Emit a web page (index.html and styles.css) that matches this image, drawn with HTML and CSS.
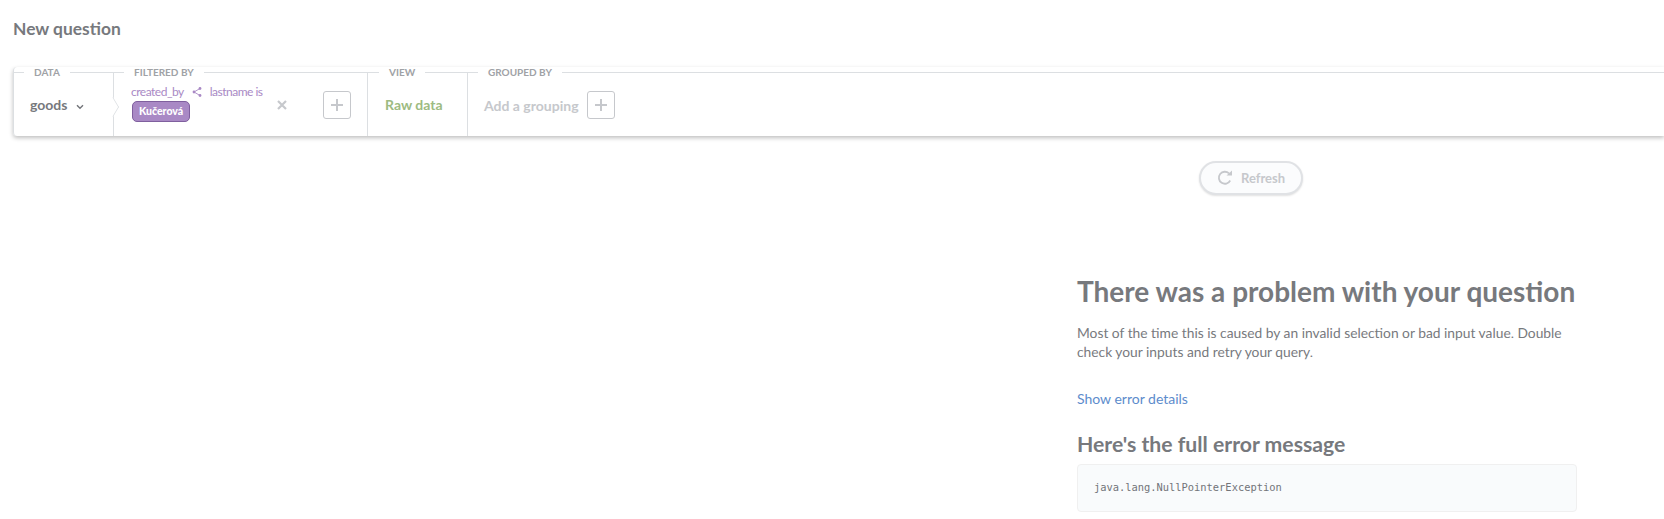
FILE: index.html
```html
<!DOCTYPE html>
<html>
  <head>
    <title>New question</title>
    <link rel="stylesheet" href="styles.css">
  </head>
  <body>
    <h1 class="title">New question</h1>
    <div class="builder">
      <fieldset class="section section-data">
        <legend>DATA</legend>
        <div class="goods">goods
          <svg class="chevron" width="8" height="6" viewBox="0 0 8 6"><path d="M1 1.2 L4 4.2 L7 1.2" fill="none" stroke="#727479" stroke-width="1.4"/></svg>
        </div>
        <span class="arrow"></span>
      </fieldset>
      <fieldset class="section section-filter">
        <legend>FILTERED BY</legend>
        <div class="filter">
          <div class="filter-text">
            <div class="filter-line">
              <span>created_by</span>
              <svg class="connect" width="10" height="10" viewBox="0 0 10 10"><path d="M8 1.5 L2 5 L8 8.5" fill="none" stroke="#a989c5" stroke-width="0.9"/><circle cx="8" cy="1.5" r="1.4" fill="#a989c5"/><circle cx="2" cy="5" r="1.4" fill="#a989c5"/><circle cx="8" cy="8.5" r="1.4" fill="#a989c5"/></svg>
              <span>lastname is</span>
            </div>
            <span class="pill">Kučerová</span>
          </div>
          <svg class="close" width="10" height="10" viewBox="0 0 10 10"><path d="M1 1 L9 9 M9 1 L1 9" stroke="#c6c8cc" stroke-width="2.2"/></svg>
          <span class="add">
            <svg width="14" height="14" viewBox="0 0 14 14"><path d="M7 1 V13 M1 7 H13" stroke="#c6c8cc" stroke-width="2"/></svg>
          </span>
        </div>
      </fieldset>
      <fieldset class="section section-view">
        <legend>VIEW</legend>
        <div class="view">Raw data</div>
      </fieldset>
      <fieldset class="section section-group">
        <legend>GROUPED BY</legend>
        <div class="grouping">
          <span>Add a grouping</span>
          <span class="add">
            <svg width="14" height="14" viewBox="0 0 14 14"><path d="M7 1 V13 M1 7 H13" stroke="#c6c8cc" stroke-width="2"/></svg>
          </span>
        </div>
      </fieldset>
    </div>
    <div class="refresh-row">
      <button class="refresh">
        <svg width="16" height="16" viewBox="0 0 16 16"><path d="M13.2 10.5 A6 6 0 1 1 12 3.4" fill="none" stroke="#c6c8cc" stroke-width="1.8"/><path d="M9.5 5.6 H15 V0.4 Z" fill="#c6c8cc"/></svg>
        Refresh
      </button>
    </div>
    <div class="error">
      <h2 class="error-title">There was a problem with your question</h2>
      <p class="error-text">Most of the time this is caused by an invalid selection or bad input value. Double check your inputs and retry your query.</p>
      <a class="error-link">Show error details</a>
      <h3 class="error-sub">Here's the full error message</h3>
      <pre class="error-code">java.lang.NullPointerException</pre>
    </div>
  </body>
</html>
```

FILE: styles.css
```css
html,
body {
  margin: 0;
  height: 519px;
  overflow: hidden;
  background: #fff;
  font-family: "Lato", sans-serif;
  color: #77797d;
}

.title {
  margin: 0;
  padding: 19px 0 0 13px;
  font-size: 17.4px;
  line-height: 20px;
  font-weight: 700;
}

.builder {
  display: flex;
  margin: 28px 0 0 13px;
  height: 69px;
  border-left: 1px solid #dcdfe2;
  border-radius: 4px 0 0 4px;
  box-shadow: 0 2px 4px rgba(0, 0, 0, 0.25);
}

.section {
  position: relative;
  box-sizing: border-box;
  margin: 0;
  padding: 0;
  min-width: 0;
  height: 69px;
  border: 0;
  border-top: 1px solid #dcdfe2;
  border-right: 1px solid #dcdfe2;
}

.section legend {
  font-size: 10px;
  line-height: 10px;
  font-weight: 700;
  color: #a0a2a6;
  padding: 0 10px;
}

.section-data {
  width: 100px;
}

.section-data legend {
  margin-left: 10px;
}

.section-filter {
  width: 254px;
}

.section-filter legend {
  margin-left: 10px;
}

.section-view {
  width: 100px;
}

.section-view legend {
  margin-left: 11px;
}

.section-group {
  flex: 1;
  border-right: 0;
}

.section-group legend {
  margin-left: 10px;
}

.goods {
  padding: 19px 0 0 16px;
  font-size: 14px;
  line-height: 18px;
  font-weight: 700;
}

.chevron {
  margin-left: 5px;
}

.arrow {
  position: absolute;
  top: 23px;
  right: -7px;
  width: 13px;
  height: 13px;
  background: #fff;
  border-top: 1px solid #dcdfe2;
  border-right: 1px solid #dcdfe2;
  transform: scaleX(0.6) rotate(45deg);
}

.filter {
  display: flex;
  align-items: center;
  height: 56px;
  padding-left: 17px;
}

.filter-text {
  width: 146px;
  margin-bottom: 5px;
  color: #a989c5;
  font-size: 12px;
  line-height: 14px;
  letter-spacing: -0.5px;
}

.filter-line {
  display: flex;
  align-items: center;
  height: 17px;
  margin-bottom: 1px;
  white-space: nowrap;
}

.connect {
  margin: 0 8px;
}

.pill {
  display: inline-block;
  margin-left: 1px;
  padding: 0 6px;
  height: 19px;
  line-height: 19px;
  font-size: 10.5px;
  letter-spacing: 0;
  color: #fff;
  font-weight: 900;
  background: #a989c5;
  border: 1px solid #7f5f9e;
  border-radius: 5px;
}

.add {
  display: flex;
  align-items: center;
  justify-content: center;
  box-sizing: border-box;
  width: 28px;
  height: 28px;
  border: 1px solid #c6c8cc;
  border-radius: 3px;
  background: #fff;
}

.filter .add {
  margin-left: 36px;
}

.view {
  padding: 19px 0 0 17px;
  font-size: 14px;
  line-height: 18px;
  font-weight: 700;
  color: #9dbb82;
}

.grouping {
  display: flex;
  align-items: center;
  height: 56px;
  padding-left: 16px;
  font-size: 14px;
  font-weight: 700;
  color: #c6c8cc;
}

.grouping .add {
  margin-left: 8px;
}

.refresh-row {
  padding: 25px 0 0 1199px;
}

.refresh {
  display: flex;
  align-items: center;
  gap: 8px;
  box-sizing: border-box;
  width: 104px;
  height: 34px;
  padding: 0 0 0 16px;
  font: 700 13px "Lato", sans-serif;
  color: #c6c8cc;
  background: #fbfcfd;
  border: 2px solid #e0e2e5;
  border-radius: 17px;
  box-shadow: 0 1px 2px rgba(0, 0, 0, 0.12);
}

.error {
  width: 500px;
  margin: 0 0 0 1077px;
  padding-top: 78px;
}

.error-title {
  margin: 0;
  font-size: 28px;
  line-height: 36px;
  font-weight: 700;
}

.error-text {
  margin: 14px 0 0;
  font-size: 13.8px;
  text-rendering: geometricPrecision;
  line-height: 19px;
}

.error-link {
  display: block;
  margin-top: 28px;
  font-size: 14px;
  line-height: 19px;
  color: #5d8ccc;
}

.error-sub {
  margin: 23px 0 0;
  font-size: 21.2px;
  line-height: 26px;
  font-weight: 700;
}

.error-code {
  margin: 7px 0 0;
  padding: 15px 16px 17px;
  height: 14px;
  font-family: "DejaVu Sans Mono", monospace;
  font-size: 10.4px;
  line-height: 14px;
  color: #727479;
  background: #f9fbfc;
  border: 1px solid #f0f0f0;
  border-radius: 4px;
}
```
